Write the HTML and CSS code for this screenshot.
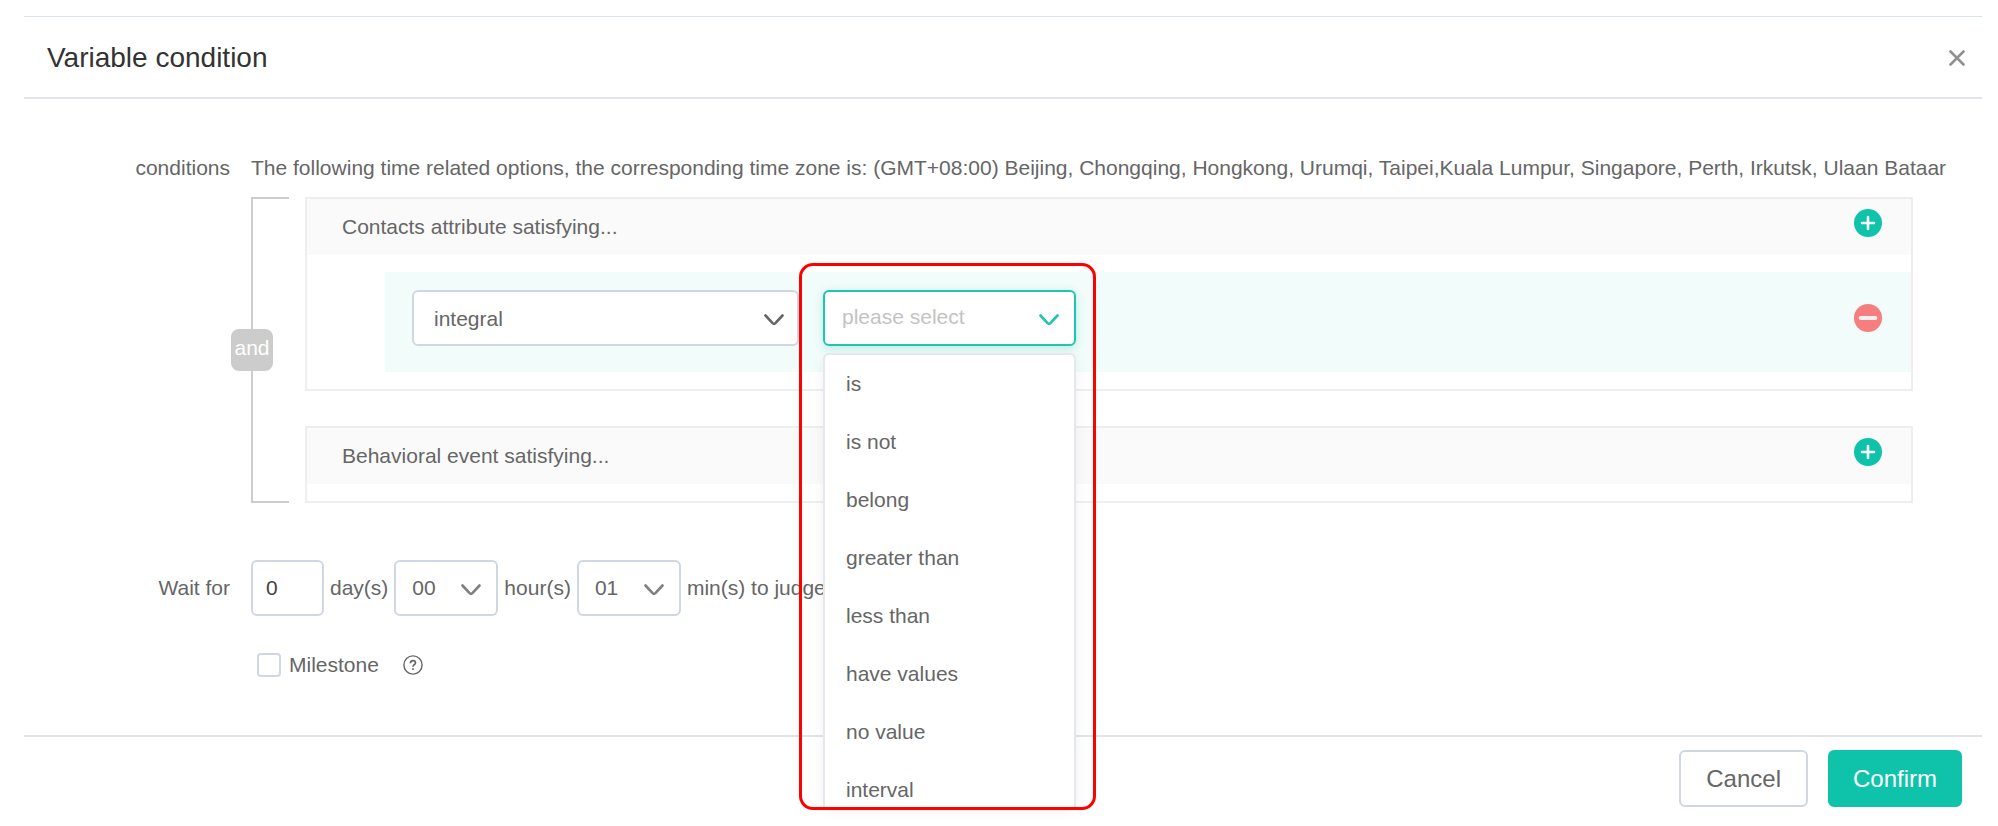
FILE: index.html
```
<!DOCTYPE html>
<html lang="en">
<head>
<meta charset="utf-8">
<title>Variable condition</title>
<link rel="stylesheet" href="styles.css">
</head>
<body>
<svg class="sprite" aria-hidden="true">
  <symbol id="chevron" viewBox="0 0 20 12"><path d="M1.5 1.5 L8.6 9.2 Q10 10.6 11.4 9.2 L18.5 1.5" fill="none" stroke="currentColor" stroke-width="2.6" stroke-linecap="round"/></symbol>
  <symbol id="plus" viewBox="0 0 28 28"><circle cx="14" cy="14" r="14" fill="#0ec3aa"/><path d="M14 8V20M8 14H20" fill="none" stroke="#f4fbfa" stroke-width="2.6" stroke-linecap="round"/></symbol>
  <symbol id="minus" viewBox="0 0 28 28"><circle cx="14" cy="14" r="14" fill="#f77e7e"/><path d="M6.7 14H21.3" fill="none" stroke="#f7f0f0" stroke-width="4" stroke-linecap="round"/></symbol>
</svg>
<main class="dialog" role="dialog" aria-labelledby="dialog-title">
  <header class="dialog-header">
    <h1 class="dialog-title" id="dialog-title">Variable condition</h1>
    <button class="icon-button" type="button" aria-label="Close">
      <svg class="close-icon" viewBox="0 0 16 16"><path d="M1.5 1.5L14.5 14.5M14.5 1.5L1.5 14.5" fill="none" stroke="#909090" stroke-width="2.6" stroke-linecap="round"/></svg>
    </button>
  </header>

  <form class="dialog-body">
    <span class="field-label">conditions</span>
    <div class="field">
      <p class="hint">The following time related options, the corresponding time zone is: (GMT+08:00) Beijing, Chongqing, Hongkong, Urumqi, Taipei,Kuala Lumpur, Singapore, Perth, Irkutsk, Ulaan Bataar</p>
      <div class="group">
        <div class="bracket"><span class="bracket-badge">and</span></div>
        <div class="panels">
          <section class="panel">
            <div class="panel-header">
              <h2 class="panel-title">Contacts attribute satisfying...</h2>
              <button class="icon-button raised" type="button" aria-label="Add contact attribute"><svg class="round-icon"><use href="#plus"/></svg></button>
            </div>
            <div class="rule">
              <div class="select attribute-select">
                <select class="control" aria-label="Attribute"><option>integral</option></select>
                <svg class="chevron"><use href="#chevron"/></svg>
              </div>
              <div class="select operator-select">
                <input class="control" type="text" role="combobox" aria-label="Operator" aria-expanded="true" aria-controls="operators" placeholder="please select" readonly>
                <svg class="chevron"><use href="#chevron"/></svg>
                <ul class="menu" id="operators" role="listbox">
                  <li class="menu-item" role="option">is</li>
                  <li class="menu-item" role="option">is not</li>
                  <li class="menu-item" role="option">belong</li>
                  <li class="menu-item" role="option">greater than</li>
                  <li class="menu-item" role="option">less than</li>
                  <li class="menu-item" role="option">have values</li>
                  <li class="menu-item" role="option">no value</li>
                  <li class="menu-item" role="option">interval</li>
                </ul>
                <div class="highlight"></div>
              </div>
              <button class="icon-button push-right" type="button" aria-label="Remove condition"><svg class="round-icon"><use href="#minus"/></svg></button>
            </div>
          </section>
          <section class="panel">
            <div class="panel-header">
              <h2 class="panel-title">Behavioral event satisfying...</h2>
              <button class="icon-button raised" type="button" aria-label="Add behavioral event"><svg class="round-icon"><use href="#plus"/></svg></button>
            </div>
          </section>
        </div>
      </div>
    </div>

    <label class="field-label wait-label" for="days">Wait for</label>
    <div class="wait">
      <input class="control days" id="days" type="text" value="0">
      <label for="days">day(s)</label>
      <div class="select time-select">
        <select class="control" id="hours"><option>00</option></select>
        <svg class="chevron"><use href="#chevron"/></svg>
      </div>
      <label for="hours">hour(s)</label>
      <div class="select time-select">
        <select class="control" id="minutes"><option>01</option></select>
        <svg class="chevron"><use href="#chevron"/></svg>
      </div>
      <label for="minutes">min(s) to judge</label>
    </div>

    <div class="milestone">
      <input class="checkbox" id="milestone" type="checkbox">
      <label for="milestone">Milestone</label>
      <svg class="help-icon" viewBox="0 0 20 20" role="img" aria-label="Help"><circle cx="10" cy="10" r="9.1" fill="none" stroke="#666" stroke-width="1.4"/><path d="M7.4 8.2Q7.4 5.7 10 5.7Q12.5 5.7 12.5 7.8Q12.5 9 11.2 9.8Q10 10.6 10 11.8" fill="none" stroke="#666" stroke-width="1.7"/><circle cx="10" cy="14" r="1" fill="#666"/></svg>
    </div>
  </form>

  <footer class="dialog-footer">
    <button class="button" type="button">Cancel</button>
    <button class="button primary" type="button">Confirm</button>
  </footer>
</main>
</body>
</html>
```

FILE: styles.css
```
* {
  box-sizing: border-box;
}

body {
  margin: 0;
  padding: 16px 16px 0 24px;
  background: #fff;
  color: #666;
  font: 21px/30px "Liberation Sans", Arial, sans-serif;
}

h1, h2, p, ul {
  margin: 0;
  padding: 0;
  font-size: inherit;
  font-weight: normal;
}

.sprite {
  display: none;
}

.dialog {
  border-top: 1px solid #dbe4ec;
}

.dialog-header {
  display: flex;
  align-items: center;
  justify-content: space-between;
  height: 82px;
  padding: 2px 17px 0 23px;
  border-bottom: 2px solid #e2e5ea;
}

.dialog-title {
  color: #333;
  font-size: 28px;
  line-height: 40px;
}

.icon-button {
  display: flex;
  padding: 0;
  border: 0;
  background: none;
  cursor: pointer;
}

.close-icon {
  width: 16px;
  height: 16px;
}

.dialog-body {
  display: grid;
  grid-template-columns: 206px minmax(0, 1fr);
  column-gap: 21px;
  padding: 54px 38px 55px 0;
}

.field-label {
  text-align: right;
}

.hint {
  white-space: nowrap;
}

.group {
  display: flex;
  gap: 16px;
  margin: 14px 31px 0 0;
}

.bracket {
  display: flex;
  align-items: center;
  width: 38px;
  border: 2px solid #ccc;
  border-right: 0;
}

.bracket-badge {
  flex: none;
  width: 42px;
  height: 42px;
  margin-left: -22px;
  border-radius: 8px;
  background: #ccc;
  color: #fff;
  line-height: 38px;
  text-align: center;
}

.panels {
  display: flex;
  flex: 1;
  flex-direction: column;
  gap: 35px;
}

.panel {
  padding-bottom: 17px;
  border: 2px solid #eee;
}

.panel-header {
  display: flex;
  align-items: center;
  justify-content: space-between;
  height: 56px;
  padding: 0 29px 0 35px;
  background: #fafafa;
}

.raised {
  margin-bottom: 8px;
}

.round-icon {
  width: 28px;
  height: 28px;
}

.rule {
  display: flex;
  align-items: center;
  gap: 24px;
  margin: 17px 0 0 78px;
  padding: 18px 29px 26px 27px;
  background: #f2fcfa;
}

.push-right {
  margin-left: auto;
}

.select {
  position: relative;
}

.control {
  display: block;
  width: 100%;
  height: 56px;
  margin: 0;
  padding: 0 16px;
  border: 2px solid #d0d7e3;
  border-radius: 6px;
  outline: 0;
  appearance: none;
  background: #fff;
  color: #666;
  font: inherit;
}

.chevron {
  position: absolute;
  top: 24px;
  right: 17px;
  width: 20px;
  height: 12px;
  color: #666;
  pointer-events: none;
}

.attribute-select {
  width: 387px;
}

.attribute-select .control {
  padding: 2px 20px 0;
}

.attribute-select .chevron {
  right: 15px;
}

.operator-select {
  width: 253px;
}

.operator-select .control {
  padding: 0 17px 2px;
  border-color: #20c5ae;
  box-shadow: 0 2px 8px rgba(14, 195, 170, 0.25);
}

.operator-select .control::placeholder {
  color: #c3c3c3;
  opacity: 1;
}

.operator-select .chevron {
  color: #20c5ae;
}

.menu {
  position: absolute;
  z-index: 1;
  top: 63px;
  left: 0;
  width: 100%;
  height: 456px;
  overflow: hidden;
  border: 2px solid #e4e8ed;
  border-bottom: 0;
  border-radius: 6px 6px 0 0;
  background: #fff;
  box-shadow: 0 2px 14px rgba(0, 0, 0, 0.06);
  list-style: none;
}

.menu-item {
  padding: 0 21px;
  line-height: 58px;
}

/* Callout frame round the open operator list */
.highlight {
  position: absolute;
  z-index: 2;
  top: -27px;
  left: -24px;
  width: 297px;
  height: 547px;
  border: 3px solid #f00;
  border-radius: 14px;
  pointer-events: none;
}

.wait-label {
  margin-top: 70px;
}

.wait {
  display: flex;
  align-items: center;
  gap: 6px;
  margin-top: 57px;
}

.days {
  width: 73px;
  padding: 0 13px;
  color: #444;
}

.time-select {
  width: 104px;
}

.time-select .chevron {
  color: #808080;
}

.milestone {
  display: flex;
  grid-column: 2;
  align-items: center;
  margin-top: 34px;
  padding-left: 6px;
}

.checkbox {
  width: 24px;
  height: 24px;
  margin: 0 8px 0 0;
  border: 2px solid #d0d7e3;
  border-radius: 4px;
  appearance: none;
  background: #fff;
}

.help-icon {
  width: 20px;
  height: 20px;
  margin-left: 24px;
}

.dialog-footer {
  display: flex;
  justify-content: flex-end;
  gap: 20px;
  padding: 13px 20px 18px;
  border-top: 2px solid #e1e5e9;
}

.button {
  height: 57px;
  padding: 0 25px;
  border: 2px solid #d0d7e3;
  border-radius: 6px;
  background: #fff;
  color: #666;
  font: 24px/32px "Liberation Sans", Arial, sans-serif;
  cursor: pointer;
}

.primary {
  padding: 0 23px;
  border-color: #0ec3aa;
  background: #0ec3aa;
  color: #fff;
}
```
